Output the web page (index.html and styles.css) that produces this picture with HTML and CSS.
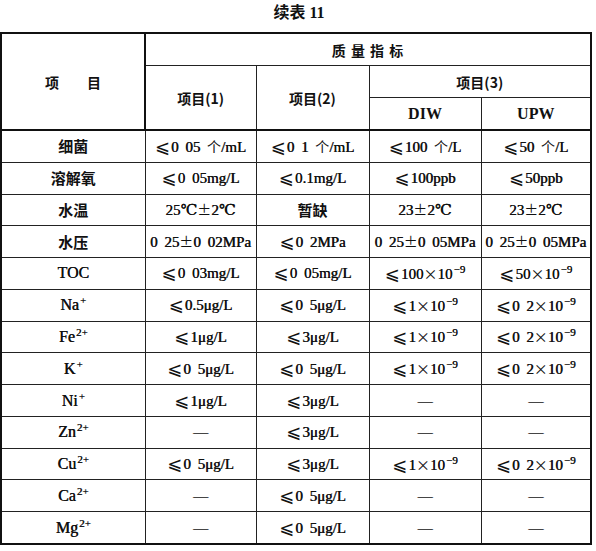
FILE: index.html
```html
<!DOCTYPE html>
<html lang="zh">
<head>
<meta charset="utf-8">
<link rel="stylesheet" href="styles.css">
</head>
<body>
<div class="title">续表 11</div>
<table class="grid">
  <colgroup>
    <col class="c0"><col class="c1"><col class="c2"><col class="c3"><col class="c4">
  </colgroup>
  <thead>
    <tr class="h1">
      <th rowspan="3" class="item">项　　目</th>
      <th colspan="4" class="spaced">质 量 指 标</th>
    </tr>
    <tr class="h2">
      <th rowspan="2">项目(1)</th>
      <th rowspan="2">项目(2)</th>
      <th colspan="2">项目(3)</th>
    </tr>
    <tr class="h3">
      <th class="lat">DIW</th>
      <th class="lat">UPW</th>
    </tr>
  </thead>
  <tbody>
    <tr><th>细菌</th><td><span class="le">⩽</span>0 05 <span class="k">个</span>/mL</td><td><span class="le">⩽</span>0 1 <span class="k">个</span>/mL</td><td><span class="le">⩽</span>100 <span class="k">个</span>/L</td><td><span class="le">⩽</span>50 <span class="k">个</span>/L</td></tr>
    <tr><th>溶解氧</th><td><span class="le">⩽</span>0 05mg/L</td><td><span class="le">⩽</span>0.1mg/L</td><td><span class="le">⩽</span>100ppb</td><td><span class="le">⩽</span>50ppb</td></tr>
    <tr><th>水温</th><td>25℃<span class="w">±</span>2℃</td><td class="cjk">暂缺</td><td>23<span class="w">±</span>2℃</td><td>23<span class="w">±</span>2℃</td></tr>
    <tr><th>水压</th><td>0 25<span class="w">±</span>0 02MPa</td><td><span class="le">⩽</span>0 2MPa</td><td>0 25<span class="w">±</span>0 05MPa</td><td>0 25<span class="w">±</span>0 05MPa</td></tr>
    <tr><th class="lat">TOC</th><td><span class="le">⩽</span>0 03mg/L</td><td><span class="le">⩽</span>0 05mg/L</td><td><span class="le">⩽</span>100<span class="w">×</span>10<sup>−9</sup></td><td><span class="le">⩽</span>50<span class="w">×</span>10<sup>−9</sup></td></tr>
    <tr><th class="lat">Na<sup>+</sup></th><td><span class="le">⩽</span>0.5μg/L</td><td><span class="le">⩽</span>0 5μg/L</td><td><span class="le">⩽</span>1<span class="w">×</span>10<sup>−9</sup></td><td><span class="le">⩽</span>0 2<span class="w">×</span>10<sup>−9</sup></td></tr>
    <tr><th class="lat">Fe<sup>2+</sup></th><td><span class="le">⩽</span>1μg/L</td><td><span class="le">⩽</span>3μg/L</td><td><span class="le">⩽</span>1<span class="w">×</span>10<sup>−9</sup></td><td><span class="le">⩽</span>0 2<span class="w">×</span>10<sup>−9</sup></td></tr>
    <tr><th class="lat">K<sup>+</sup></th><td><span class="le">⩽</span>0 5μg/L</td><td><span class="le">⩽</span>0 5μg/L</td><td><span class="le">⩽</span>1<span class="w">×</span>10<sup>−9</sup></td><td><span class="le">⩽</span>0 2<span class="w">×</span>10<sup>−9</sup></td></tr>
    <tr><th class="lat">Ni<sup>+</sup></th><td><span class="le">⩽</span>1μg/L</td><td><span class="le">⩽</span>3μg/L</td><td>—</td><td>—</td></tr>
    <tr><th class="lat">Zn<sup>2+</sup></th><td>—</td><td><span class="le">⩽</span>3μg/L</td><td>—</td><td>—</td></tr>
    <tr><th class="lat">Cu<sup>2+</sup></th><td><span class="le">⩽</span>0 5μg/L</td><td><span class="le">⩽</span>3μg/L</td><td><span class="le">⩽</span>1<span class="w">×</span>10<sup>−9</sup></td><td><span class="le">⩽</span>0 2<span class="w">×</span>10<sup>−9</sup></td></tr>
    <tr><th class="lat">Ca<sup>2+</sup></th><td>—</td><td><span class="le">⩽</span>0 5μg/L</td><td>—</td><td>—</td></tr>
    <tr><th class="lat">Mg<sup>2+</sup></th><td>—</td><td><span class="le">⩽</span>0 5μg/L</td><td>—</td><td>—</td></tr>
  </tbody>
</table>
</body>
</html>
```

FILE: styles.css
```css
html, body {
  margin: 0;
  padding: 0;
  background: #fff;
  color: #111;
}
body {
  width: 596px;
  font-family: "Liberation Serif", "DejaVu Serif", "Noto Sans CJK SC", serif;
}
.title {
  height: 32px;
  line-height: 26px;
  text-align: center;
  font-weight: bold;
  font-size: 16px;
  font-family: "Liberation Serif", "Noto Sans CJK SC", serif;
  padding-left: 2px;
}
.grid {
  border-collapse: collapse;
  table-layout: fixed;
  width: 592px;
  border: 2px solid #111;
  font-size: 15px;
}
.c0 { width: 144px; }
.c1 { width: 111px; }
.c2 { width: 113px; }
.c3 { width: 112px; }
.c4 { width: 110px; }
.grid th, .grid td {
  border: 1px solid #222;
  height: 31px;
  padding: 0;
  text-align: center;
  vertical-align: middle;
  white-space: nowrap;
  overflow: hidden;
  text-overflow: clip;
  font-weight: bold;
  line-height: 16px;
}
.grid tbody tr td, .grid tbody tr th {
  height: 30.77px;
}
.grid td {
  font-weight: normal;
  text-shadow: 0.4px 0 0 #111;
  word-spacing: 3px;
}
.grid thead th {
  font-family: "Noto Sans CJK SC", sans-serif;
  font-size: 14px;
}
.grid thead th.lat {
  font-family: "Liberation Serif", serif;
  font-size: 16px;
}
.grid tbody th {
  font-family: "Noto Sans CJK SC", sans-serif;
  font-size: 15px;
}
.grid tbody th.lat {
  font-family: "Liberation Serif", serif;
  font-weight: normal;
  text-shadow: 0.4px 0 0 #111;
  font-size: 16px;
}
.grid thead tr.h3 th, .grid thead tr.h2 th[rowspan], .grid thead th.item {
  border-bottom: 2px solid #111;
}
.spaced {
  letter-spacing: 1px;
}
.item {
  border-right: 2px solid #111 !important;
}
.cjk {
  font-family: "Noto Sans CJK SC", sans-serif;
  font-weight: bold !important;
  text-shadow: none !important;
}
.le {
  display: inline-block;
  font-family: "DejaVu Sans", sans-serif;
  font-size: 18px;
  line-height: 16px;
  text-shadow: none;
  margin-right: 1px;
  vertical-align: -1px;
}
.k {
  font-family: "Noto Sans CJK SC", sans-serif;
  font-size: 14px;
  text-shadow: none;
}
.w {
  font-family: "Noto Sans CJK SC", sans-serif;
  font-size: 14px;
  text-shadow: none;
}
sup {
  font-size: 11px;
  line-height: 0;
  vertical-align: 6px;
  margin-left: 1px;
}
```
